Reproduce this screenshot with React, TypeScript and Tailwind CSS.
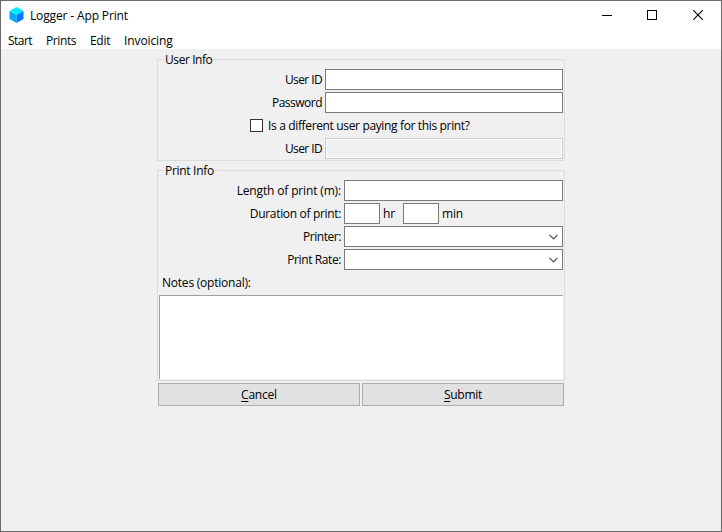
import type { ReactNode } from 'react';

function Label({ className = '', children }: { className?: string; children: ReactNode }) {
  return <span className={`block h-[21px] leading-[21px] whitespace-nowrap ${className}`}>{children}</span>;
}

function Group({ title, titleClass, className, children }: { title: string; titleClass: string; className: string; children: ReactNode }) {
  return (
    <section className={`flex w-[408px] flex-col border border-[#dcdcdc] ${className}`}>
      <h2 className={`-mt-[9px] mb-[1px] ml-[6px] h-[17px] shrink-0 self-start bg-[#f0f0f0] pl-[1px] leading-[17px] whitespace-nowrap ${titleClass}`}>{title}</h2>
      {children}
    </section>
  );
}

function Row({ children }: { children: ReactNode }) {
  return <div className="mb-[2px] flex h-[21px] shrink-0 justify-end pr-[1px]">{children}</div>;
}

function Field({ className }: { className: string }) {
  return <input className={`block h-[21px] shrink-0 border border-[#7a7a7a] bg-white px-1 outline-none ${className}`} />;
}

function Combo() {
  return (
    <div className="ml-[3px] flex h-[21px] w-[219px] items-center justify-end border border-[#7a7a7a] bg-white pr-[4px]">
      <svg width="9" height="6" viewBox="0 0 9 6" fill="none" stroke="#505050" strokeWidth="1.2">
        <path d="M0.5 0.8L4.5 4.8L8.5 0.8" />
      </svg>
    </div>
  );
}

function PushButton({ hot, rest, className }: { hot: string; rest: string; className: string }) {
  return (
    <button className="h-[23px] w-[202px] border border-[#adadad] bg-[#e1e1e1] leading-[21px]">
      <span className={`inline-block ${className}`}>
        <span className="underline decoration-1 underline-offset-2">{hot}</span>
        {rest}
      </span>
    </button>
  );
}

export default function App() {
  return (
    <div className="flex h-[532px] w-[722px] flex-col overflow-hidden border border-[#6b6b6b] bg-[#f0f0f0] font-['Open_Sans','Noto_Sans',sans-serif] text-[12px] text-black">
      <header className="flex h-[29px] shrink-0 items-start bg-white">
        <svg className="mt-[6px] ml-[8px]" width="15" height="16" viewBox="0 0 15 16">
          <path d="M7.5 0L14.5 4L7.5 8L0.5 4Z" fill="#00eaff" />
          <path d="M0.5 4L7.5 8V16L0.5 12Z" fill="#00a8ff" />
          <path d="M14.5 4L7.5 8V16L14.5 12Z" fill="#0078ff" />
        </svg>
        <h1 className="ml-[6px] h-[29px] leading-[29px] tracking-[-0.14px]">Logger - App Print</h1>
        <div className="mt-[9px] mr-[18px] ml-auto flex">
          <svg className="mr-[35px]" width="10" height="10" shapeRendering="crispEdges"><path d="M0 5.5H10" stroke="#000" /></svg>
          <svg className="mr-[36px]" width="10" height="10" shapeRendering="crispEdges"><path d="M0.5 0.5H9.5V9.5H0.5Z" fill="none" stroke="#000" /></svg>
          <svg width="10" height="10"><path d="M0.2 0.2L9.8 9.8M9.8 0.2L0.2 9.8" fill="none" stroke="#000" strokeWidth="1.1" /></svg>
        </div>
      </header>
      <nav className="flex h-[19px] shrink-0 bg-white pl-[7px] leading-[22px]">
        <span className="w-[38px] tracking-[-0.55px]">Start</span>
        <span className="w-[44px] tracking-[-0.4px]">Prints</span>
        <span className="w-[34px] tracking-[-0.3px]">Edit</span>
        <span className="tracking-[-0.1px]">Invoicing</span>
      </nav>
      <main className="ml-[156px] flex w-[408px] flex-col pt-[10px]">
        <Group title="User Info" titleClass="tracking-[-0.42px]" className="h-[102px]">
          <Row>
            <Label className="tracking-[-0.6px]">User ID</Label>
            <Field className="ml-[3px] w-[238px]" />
          </Row>
          <Row>
            <Label className="tracking-[-0.5px]">Password</Label>
            <Field className="ml-[3px] w-[238px]" />
          </Row>
          <div className="mb-[2px] ml-[92px] flex h-[21px] shrink-0 items-center">
            <span className="block size-[13px] border border-[#333] bg-white" />
            <Label className="ml-[5px] tracking-[-0.35px]">Is a different user paying for this print?</Label>
          </div>
          <Row>
            <Label className="tracking-[-0.6px]">User ID</Label>
            <div className="ml-[3px] h-[21px] w-[238px] border border-[#ccc] bg-white p-px">
              <div className="h-full bg-[#f0f0f0]" />
            </div>
          </Row>
        </Group>
        <Group title="Print Info" titleClass="tracking-[-0.3px]" className="mt-[9px] h-[211px]">
          <Row>
            <Label className="tracking-[-0.15px]">Length of print (m):</Label>
            <Field className="ml-[3px] w-[219px]" />
          </Row>
          <Row>
            <Label className="tracking-[-0.33px]">Duration of print:</Label>
            <Field className="ml-[3px] w-[36px]" />
            <Label className="ml-[3px] w-[20px]">hr</Label>
            <Field className="w-[36px]" />
            <Label className="ml-[3px] w-[121px] tracking-[-0.2px]">min</Label>
          </Row>
          <Row>
            <Label className="tracking-[-0.45px]">Printer:</Label>
            <Combo />
          </Row>
          <Row>
            <Label className="tracking-[-0.4px]">Print Rate:</Label>
            <Combo />
          </Row>
          <Label className="ml-[4px] tracking-[-0.22px]">Notes (optional):</Label>
          <textarea className="mt-[2px] ml-[1px] block h-[84px] w-[404px] shrink-0 resize-none border-t border-l border-[#a0a0a0] bg-white outline-none" />
        </Group>
        <div className="mt-[2px] ml-[1px] flex gap-[2px]">
          <PushButton hot="C" rest="ancel" className="tracking-[-0.2px]" />
          <PushButton hot="S" rest="ubmit" className="tracking-[-0.25px]" />
        </div>
      </main>
    </div>
  );
}
